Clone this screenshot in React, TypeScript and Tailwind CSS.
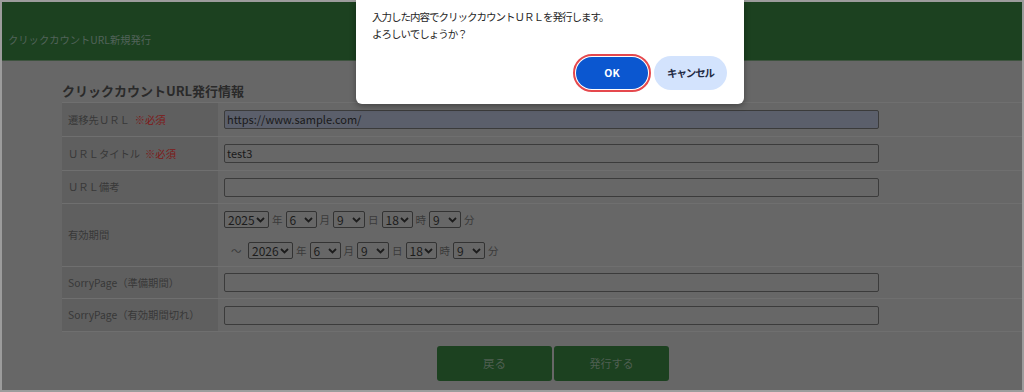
import React from "react";

const jp = { fontFamily: '"Noto Sans CJK JP", "Noto Sans", sans-serif' };

function Sel({ value, w }: { value: string; w: string }) {
  return (
    <div
      className={`flex items-center justify-between h-[17px] border border-[#333] rounded-[2px] pl-[3px] pr-[3px] text-[12px] text-[#1c1c1c] ${w}`}
    >
      <span className="leading-none">{value}</span>
      <svg width="9" height="6" viewBox="0 0 9 6">
        <path d="M1 1l3.5 3.5L8 1" stroke="#1c1c1c" strokeWidth="1.8" fill="none" />
      </svg>
    </div>
  );
}

function DateRow({ year, prefix }: { year: string; prefix?: boolean }) {
  return (
    <div className="flex items-center gap-[3px] text-[10.5px] text-[#3a3a3a]">
      {prefix && <span className="w-[21px] pl-[7px]">～</span>}
      <Sel value={year} w="w-[45px]" />
      <span>年</span>
      <Sel value="6" w="w-[31px]" />
      <span>月</span>
      <Sel value="9" w="w-[32px]" />
      <span>日</span>
      <Sel value="18" w="w-[31px]" />
      <span>時</span>
      <Sel value="9" w="w-[32px]" />
      <span>分</span>
    </div>
  );
}

function Row({
  label,
  req,
  children,
  h,
}: {
  label: string;
  req?: boolean;
  children: React.ReactNode;
  h: string;
}) {
  return (
    <div className={`flex border-b border-[#6f6f6f] ${h}`}>
      <div className="w-[156px] shrink-0 bg-[#5f5f5f] flex items-center pl-[6px] text-[10.3px] text-[#383838]">
        {label}
        {req && <span className="ml-[5px] text-[#7e1919]">※必須</span>}
      </div>
      <div className="flex-1 flex flex-col justify-center pl-[6px]">{children}</div>
    </div>
  );
}

function Input({ value, filled }: { value?: string; filled?: boolean }) {
  return (
    <div
      className={`w-[655px] h-[19px] border border-[#3b3b3b] rounded-[2px] px-[2px] flex items-center text-[11px] text-[#1a1a1a] ${
        filled ? "bg-[#5b5f6b]" : ""
      }`}
    >
      {value}
    </div>
  );
}

export default function App() {
  return (
    <div className="w-[1024px] h-[392px] relative overflow-hidden bg-[#676767]" style={jp}>
      <div className="absolute inset-0 border-2 border-[#9c9c9c] pointer-events-none z-10" />
      {/* header */}
      <div className="h-[61px] bg-[#1c4120] border-b border-[#3e533f] flex items-end pl-[8px] pb-[13px]">
        <span className="text-[10.3px] text-[#52635a]">クリックカウントURL新規発行</span>
      </div>

      {/* form */}
      <div className="pl-[62px] pt-[22px]">
        <div className="text-[13px] font-bold text-[#2a2a2a] leading-[16px] mb-[3px]">
          クリックカウントURL発行情報
        </div>
        <div className="border-t border-[#6f6f6f]">
          <Row label="遷移先ＵＲＬ" req h="h-[34px]">
            <Input value="https://www.sample.com/" filled />
          </Row>
          <Row label="ＵＲＬタイトル" req h="h-[34px]">
            <Input value="test3" />
          </Row>
          <Row label="ＵＲＬ備考" h="h-[33px]">
            <Input />
          </Row>
          <Row label="有効期間" h="h-[63px]">
            <div className="flex flex-col gap-[14px]">
              <DateRow year="2025" />
              <DateRow year="2026" prefix />
            </div>
          </Row>
          <Row label="SorryPage（準備期間）" h="h-[32px]">
            <Input />
          </Row>
          <Row label="SorryPage（有効期間切れ）" h="h-[33px]">
            <Input />
          </Row>
        </div>
      </div>

      <div className="flex justify-center gap-[2px] mt-[14px] ml-[82px]">
        <button className="w-[115px] h-[35px] rounded-[3px] bg-[#1c4120] text-[11.5px] text-[#4f5f52]">
          戻る
        </button>
        <button className="w-[115px] h-[35px] rounded-[3px] bg-[#1c4120] text-[11px] text-[#4f5f52]">
          発行する
        </button>
      </div>

      {/* confirm dialog */}
      <div className="absolute left-[356px] top-0 w-[388px] h-[104px] bg-white rounded-b-[6px] shadow-[0_2px_6px_rgba(0,0,0,0.35)] z-20 px-[16px] pt-[8px]">
        <div className="text-[10.5px] tracking-[-1px] leading-[17px] text-[#262626]">
          入力した内容でクリックカウントＵＲＬを発行します。
          <br />
          よろしいでしょうか？
        </div>
        <div className="flex justify-end items-center gap-[3px] mt-[12px] mr-[1px]">
          <div className="rounded-full border-[2px] border-[#e5484d] p-[1px]">
            <button className="w-[72px] h-[32px] rounded-full bg-[#0b57d0] text-white text-[10.5px] font-bold">
              OK
            </button>
          </div>
          <button className="w-[73px] h-[34px] rounded-full bg-[#d3e3fd] text-[#1f2a44] text-[10.5px] tracking-[-1.1px] font-bold">
            キャンセル
          </button>
        </div>
      </div>
    </div>
  );
}
